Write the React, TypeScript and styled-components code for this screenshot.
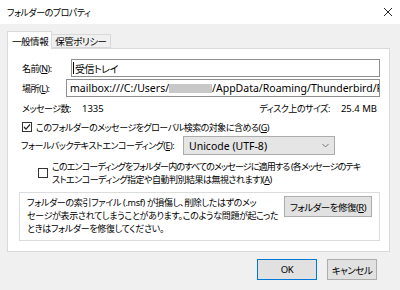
import React from "react";
import styled, { createGlobalStyle } from "styled-components";

const FONT = `"Noto Sans", "Noto Sans CJK JP", sans-serif`;

const Global = createGlobalStyle`
  html, body { margin: 0; padding: 0; background: #f0f0f0; }
  #root { width: 400px; height: 290px; }
  * { box-sizing: border-box; }
`;

const Window = styled.div`
  width: 400px;
  height: 290px;
  overflow: hidden;
  background: #f0f0f0;
  font-family: ${FONT};
  font-size: 9px;
  letter-spacing: -0.5px;
  font-feature-settings: "palt" 1;
  color: #000;
  display: flex;
  flex-direction: column;
`;

const TitleBar = styled.div`
  height: 24px;
  background: #fff;
  display: flex;
  align-items: center;
  justify-content: space-between;
  padding: 0 7px 0 7px;
  flex-shrink: 0;
`;

const Title = styled.span`
  font-size: 9px;
  letter-spacing: -0.5px;
  color: #000;
`;

const Content = styled.div`
  padding: 7px 10px 0 7px;
  display: flex;
  flex-direction: column;
`;

const TabStrip = styled.div`
  display: flex;
  align-items: flex-end;
  height: 17px;
`;

const Tab = styled.div<{ $active?: boolean }>`
  height: ${(p) => (p.$active ? "18px" : "14px")};
  margin-bottom: ${(p) => (p.$active ? "-1px" : "0")};
  margin-left: ${(p) => (p.$active ? "0" : "-1px")};
  padding: 0 3px 0 ${(p) => (p.$active ? "4px" : "3px")};
  border: 1px solid #d9d9d9;
  border-bottom: ${(p) => (p.$active ? "none" : "1px solid #d9d9d9")};
  background: ${(p) => (p.$active ? "#fff" : "#f0f0f0")};
  display: flex;
  align-items: center;
  position: relative;
  z-index: ${(p) => (p.$active ? 1 : 0)};
  white-space: nowrap;
  font-size: 9.5px;
  letter-spacing: -0.45px;
`;

const Panel = styled.div`
  width: 383px;
  height: 204px;
  background: #fff;
  border: 1px solid #d9d9d9;
  padding: 10px 9px 0 11px;
  display: flex;
  flex-direction: column;
`;

const Row = styled.div<{ $h: number; $mt: number }>`
  height: ${(p) => p.$h}px;
  margin-top: ${(p) => p.$mt}px;
  display: flex;
  align-items: center;
  white-space: nowrap;
`;

const FieldLabel = styled.span`
  width: 44px;
  margin-left: 3px;
  flex-shrink: 0;
`;

const TextBox = styled.div<{ $indent: number }>`
  flex: 1;
  height: 100%;
  margin-left: ${(p) => p.$indent}px;
  border: 1px solid #8f8f8f;
  background: #fff;
  display: flex;
  align-items: center;
  padding-left: 3px;
  overflow: hidden;
  white-space: nowrap;
  font-size: 10.5px;
  letter-spacing: 0;
`;

const JpText = styled.span`
  font-size: 10px;
  letter-spacing: -0.5px;
`;

const Tight = styled.span`
  letter-spacing: -0.85px;
`;

const Caret = styled.span`
  display: inline-block;
  width: 1px;
  height: 12px;
  background: #000;
  margin-left: -2px;
  margin-right: 1px;
`;

const Redacted = styled.span`
  display: inline-block;
  width: 43px;
  height: 9px;
  background: #c8c8c8;
  flex-shrink: 0;
`;

const StatLabel = styled.span<{ $w?: number }>`
  width: ${(p) => (p.$w ? `${p.$w}px` : "auto")};
  margin-left: 3px;
`;

const Num = styled.span<{ $ml?: number; $mr?: number }>`
  font-size: 9.5px;
  letter-spacing: 0;
  margin-left: ${(p) => p.$ml ?? 0}px;
  margin-right: ${(p) => p.$mr ?? 0}px;
`;

const Spacer = styled.div`
  flex: 1;
`;

const Box = styled.span<{ $indent: number }>`
  width: 10px;
  height: 10px;
  border: 1px solid #333;
  background: #fff;
  margin-left: ${(p) => p.$indent}px;
  margin-right: 4px;
  flex-shrink: 0;
  display: flex;
  align-items: center;
  justify-content: center;
`;

const Select = styled.div`
  width: 152px;
  height: 100%;
  margin-left: auto;
  margin-right: 45px;
  border: 1px solid #acacac;
  background: #e5e5e5;
  display: flex;
  align-items: center;
  justify-content: space-between;
  padding: 0 5px 0 5px;
  font-size: 10.5px;
  letter-spacing: 0;
`;

const PlainLabel = styled.span`
  margin-left: 2px;
`;

const MultiLine = styled.div<{ $ls?: number }>`
  line-height: 13px;
  white-space: nowrap;
  letter-spacing: ${(p) => p.$ls ?? -0.5}px;
`;

const CheckBlock = styled.div`
  height: 26px;
  margin-top: 5px;
  display: flex;
  align-items: center;
`;

const Group = styled.div`
  margin-top: 6px;
  height: 49px;
  border: 1px solid #dcdcdc;
  display: flex;
  justify-content: space-between;
  align-items: flex-start;
  padding: 3px 7px 0 7px;
`;

const Button = styled.button<{ $w: number; $default?: boolean }>`
  width: ${(p) => p.$w}px;
  height: 21px;
  border: 1px solid ${(p) => (p.$default ? "#0078d7" : "#adadad")};
  background: #e1e1e1;
  font-family: ${FONT};
  font-size: 9.5px;
  letter-spacing: -0.5px;
  font-feature-settings: "palt" 1;
  color: #000;
  padding: 0;
  flex-shrink: 0;
  white-space: nowrap;
`;

const ButtonBar = styled.div`
  display: flex;
  justify-content: flex-end;
  gap: 10px;
  margin-top: 7px;
  padding-right: 13px;
`;

const Chevron = () => (
  <svg width="7" height="5" viewBox="0 0 7 5">
    <path d="M0.5 1 L3.5 4 L6.5 1" fill="none" stroke="#777" strokeWidth="1" />
  </svg>
);

const CloseIcon = () => (
  <svg width="10" height="10" viewBox="0 0 10 10">
    <path d="M1 1 L9 9 M9 1 L1 9" stroke="#222" strokeWidth="1" />
  </svg>
);

const CheckMark = () => (
  <svg width="8" height="8" viewBox="0 0 8 8">
    <path d="M1 4 L3 6.2 L7 1.5" fill="none" stroke="#222" strokeWidth="1.2" />
  </svg>
);

export default function App() {
  return (
    <>
      <Global />
      <Window>
        <TitleBar>
          <Title>フォルダーのプロパティ</Title>
          <CloseIcon />
        </TitleBar>
        <Content>
          <TabStrip>
            <Tab $active>一般情報</Tab>
            <Tab>保管ポリシー</Tab>
          </TabStrip>
          <Panel>
            <Row $h={18} $mt={0}>
              <FieldLabel>
                名前(<u>N</u>):
              </FieldLabel>
              <TextBox $indent={5}>
                <Caret />
                <JpText>受信トレイ</JpText>
              </TextBox>
            </Row>
            <Row $h={18} $mt={2}>
              <FieldLabel>
                場所(<u>L</u>):
              </FieldLabel>
              <TextBox $indent={0}>
                mailbox:///C:/Users/
                <Redacted />
                /AppData/Roaming/Thunderbird/Profiles
              </TextBox>
            </Row>
            <Row $h={13} $mt={5}>
              <StatLabel $w={60}>メッセージ数:</StatLabel>
              <Num>1335</Num>
              <Spacer />
              <span>ディスク上のサイズ:</span>
              <Num $ml={11} $mr={3}>
                25.4 MB
              </Num>
            </Row>
            <Row $h={14} $mt={5}>
              <Box $indent={3}>
                <CheckMark />
              </Box>
              <span>
                このフォルダーのメッセージをグローバル検索の対象に含める(<u>G</u>)
              </span>
            </Row>
            <Row $h={19} $mt={2}>
              <PlainLabel>
                フォールバックテキストエンコーディング(<u>E</u>):
              </PlainLabel>
              <Select>
                <span>Unicode (UTF-8)</span>
                <Chevron />
              </Select>
            </Row>
            <CheckBlock>
              <Box $indent={19}>{null}</Box>
              <MultiLine>
                <Tight>
                  このエンコーディングをフォルダー内のすべてのメッセージに適用する (各メッセージのテキ
                </Tight>
                <br />
                ストエンコーディング指定や自動判別結果は無視されます)(<u>A</u>)
              </MultiLine>
            </CheckBlock>
            <Group>
              <MultiLine $ls={-0.32}>
                フォルダーの索引ファイル (.msf) が損傷し、削除したはずのメッ
                <br />
                セージが表示されてしまうことがあります。このような問題が起こった
                <br />
                ときはフォルダーを修復してください。
              </MultiLine>
              <Button $w={88}>
                フォルダーを修復(<u>R</u>)
              </Button>
            </Group>
          </Panel>
          <ButtonBar>
            <Button $w={60} $default>
              OK
            </Button>
            <Button $w={50}>キャンセル</Button>
          </ButtonBar>
        </Content>
      </Window>
    </>
  );
}
